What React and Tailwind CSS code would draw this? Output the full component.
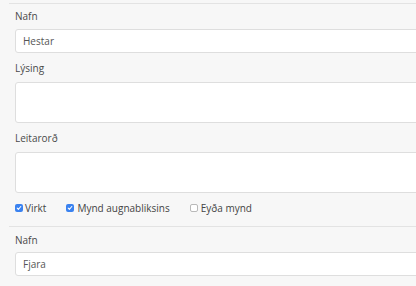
import React from "react";

// Small fake checkbox that matches the scaled-down native look
const Box = ({ checked }) =>
  checked ? (
    <span className="flex h-[8px] w-[8px] items-center justify-center rounded-[2px] bg-[#3a82f0]">
      <svg width="6" height="6" viewBox="0 0 8 8" fill="none">
        <path d="M1.6 4.2 3.2 5.8 6.4 2" stroke="white" strokeWidth="1.4" strokeLinecap="round" strokeLinejoin="round" />
      </svg>
    </span>
  ) : (
    <span className="h-[8px] w-[8px] rounded-[2px] border border-[#b9b9b9] bg-white" />
  );

const Field = ({ label, value, tall, className = "", gap = "mb-[7px]" }) => (
  <div className={className}>
    <div className={`${gap} text-[10px] leading-[14px] text-[#4a4a4a]`}>{label}</div>
    <div
      className={`flex w-[440px] items-center rounded-[3px] border border-[#dedede] bg-white pl-[7px] text-[10px] text-[#555] ${
        tall ? "h-[41px]" : "h-[24px]"
      }`}
    >
      {value}
    </div>
  </div>
);

export default function App() {
  return (
    <div
      className="h-[286px] w-[416px] overflow-hidden bg-[#f7f7f7] pl-[9px] pt-[3px]"
      style={{ fontFamily: "'Open Sans', Lato, sans-serif" }}
    >
      {/* first item */}
      <div className="border-t border-[#e3e3e3] pl-[6px] pt-[5px]">
        <Field label="Nafn" value="Hestar" gap="mb-[6px]" />
        <Field label="Lýsing" tall className="mt-[8px]" />
        <Field label="Leitarorð" tall className="mt-[8px]" />

        <div className="mt-[8px] flex h-[14px] items-center text-[10px] text-[#444]">
          <label className="flex items-center gap-[2px]">
            <Box checked />
            <span>Virkt</span>
          </label>
          <label className="ml-[20px] flex items-center gap-[3px]">
            <Box checked />
            <span>Mynd augnabliksins</span>
          </label>
          <label className="ml-[20px] flex items-center gap-[3px]">
            <Box />
            <span>Eyða mynd</span>
          </label>
        </div>
      </div>

      {/* second item */}
      <div className="mt-[11px] border-t border-[#e3e3e3] pl-[6px] pt-[6px]">
        <Field label="Nafn" value="Fjara" gap="mb-[5px]" />
      </div>
    </div>
  );
}
